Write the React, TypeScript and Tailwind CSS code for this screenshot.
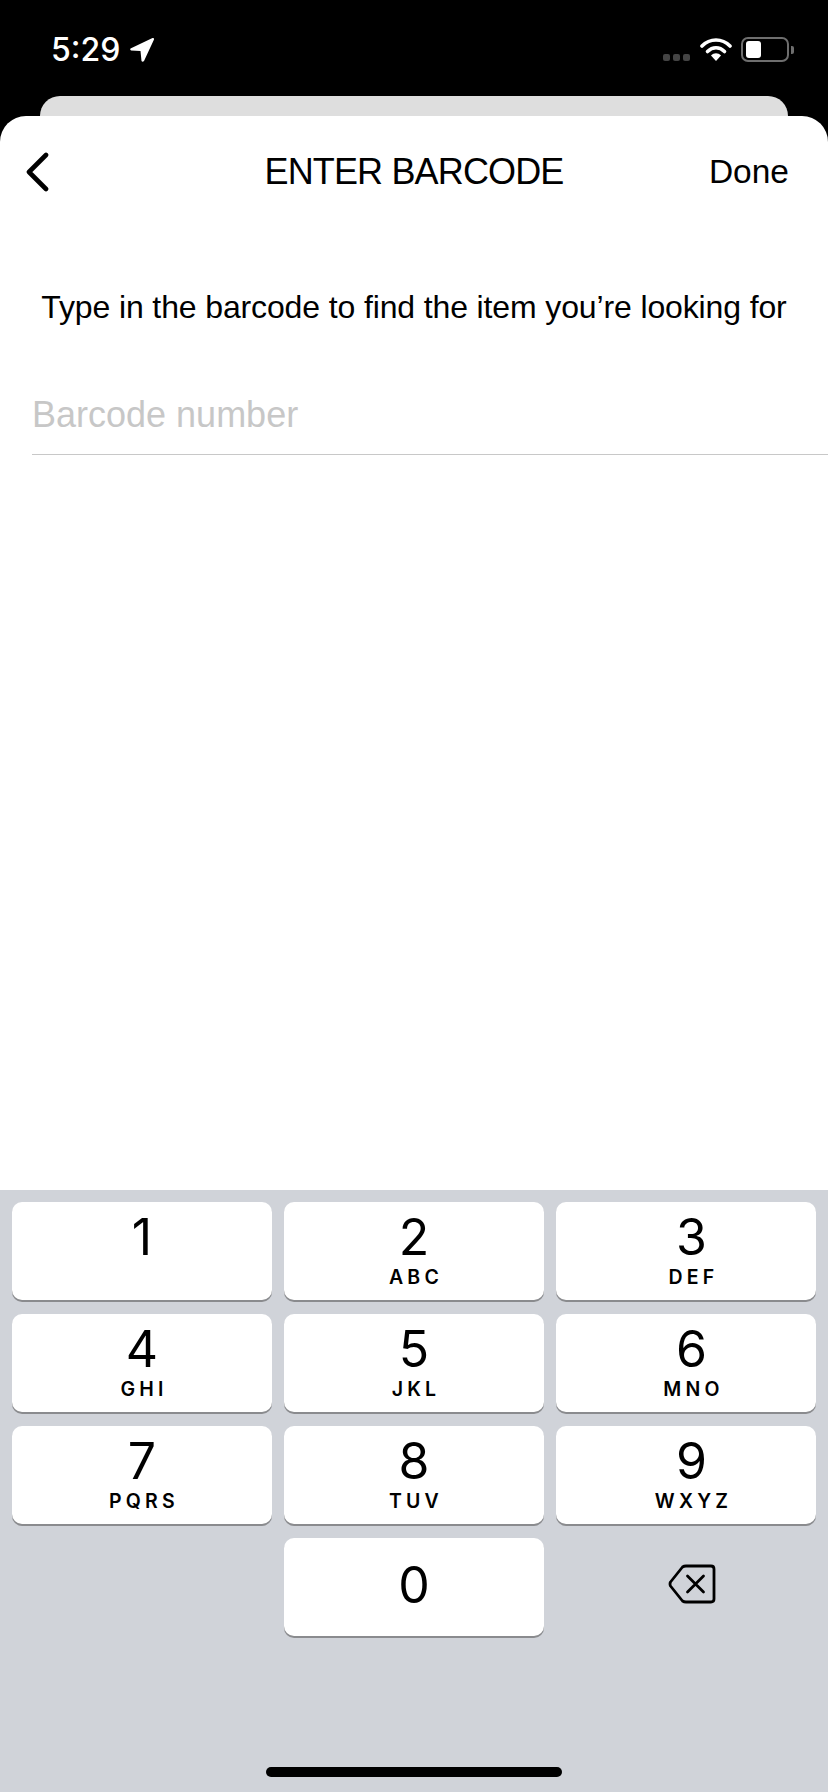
const keys: [string, string][] = [
  ['1', ''], ['2', 'ABC'], ['3', 'DEF'],
  ['4', 'GHI'], ['5', 'JKL'], ['6', 'MNO'],
  ['7', 'PQRS'], ['8', 'TUV'], ['9', 'WXYZ'],
];

function Key({ n, l, last }: { n: string; l: string; last: boolean }) {
  return (
    <div className={`h-[98px] rounded-[10px] bg-white shadow-[0_2px_0_#8a8b8e] flex flex-col items-center ${last ? 'pl-[11px]' : ''}`}>
      <div className="font-['Inter',sans-serif] text-[50px] leading-[50px] mt-[10px] text-black">{n}</div>
      {l && <div className="font-['Inter',sans-serif] font-semibold text-[19.5px] leading-[20px] tracking-[4.2px] mt-[5px] pl-[4px] text-black">{l}</div>}
    </div>
  );
}

export default function App() {
  return (
    <div className="w-[828px] h-[1792px] bg-black flex flex-col overflow-hidden">
      <div className="h-[96px] flex justify-between shrink-0">
        <div className="flex items-start pl-[51px] pt-[28px] gap-[9px]">
          <span className="font-['Inter',sans-serif] font-medium text-[32px] leading-[44px] text-white">5:29</span>
          <svg width="26" height="26" viewBox="0 0 26 26" className="mt-[9px]">
            <path d="M1.5 11.5 L23.5 1 Q25.5 0.5 25 2.5 L15 24 Q13.5 25.5 12.5 24 L11.5 14 L2 13.6 Q0.5 12.5 1.5 11.5 Z" fill="#fff" />
          </svg>
        </div>
        <div className="flex items-start pr-[34px] pt-[37px]">
          <div className="flex gap-[3px] mt-[17px] mr-[10px]">
            <div className="w-[7px] h-[7px] rounded-[2px] bg-[#444]" />
            <div className="w-[7px] h-[7px] rounded-[2px] bg-[#444]" />
            <div className="w-[7px] h-[7px] rounded-[2px] bg-[#444]" />
          </div>
          <svg width="32" height="25" viewBox="0 0 32 25" className="mr-[9px]">
            <path d="M2 9 C10 1 22 1 30 9" fill="none" stroke="#fff" strokeWidth="3.6" strokeLinecap="round" />
            <path d="M7.5 14.5 C12.5 9.5 19.5 9.5 24.5 14.5" fill="none" stroke="#fff" strokeWidth="3.6" strokeLinecap="round" />
            <path d="M11 18.5 C14 15.5 18 15.5 21 18.5 L16 24 Z" fill="#fff" />
          </svg>
          <div className="w-[48px] h-[25px] rounded-[7px] border-2 border-[#6e6e6e] px-[3px] py-[2px]">
            <div className="w-[15px] h-full rounded-[3px] bg-white" />
          </div>
          <div className="w-[3px] h-[8px] rounded-r-[2px] bg-[#6e6e6e] ml-[2px] mt-[9px]" />
        </div>
      </div>
      <div className="h-[20px] mx-[40px] bg-[#dedede] rounded-t-[20px] shrink-0" />
      <div className="flex-1 bg-white rounded-t-[26px] flex flex-col font-['Liberation_Sans',sans-serif] text-black">
        <div className="h-[112px] pl-[25px] pr-[39px] flex items-center justify-between relative">
          <svg width="24" height="40" viewBox="0 0 24 40">
            <path d="M21 3 L4 20 L21 37" fill="none" stroke="#000" strokeWidth="4.6" strokeLinecap="round" strokeLinejoin="round" />
          </svg>
          <div className="absolute left-0 right-0 text-center text-[36px] leading-[40px] tracking-[-0.85px]">ENTER BARCODE</div>
          <div className="text-[33.5px] leading-[40px]">Done</div>
        </div>
        <div className="text-center text-[32px] leading-[40px] tracking-[-0.13px] mt-[59px]">Type in the barcode to find the item you’re looking for</div>
        <div className="ml-[32px] mt-[54px] h-[74px] border-b border-[#c8c8c8] text-[36px] leading-[40px] pt-[14px] text-[#c7c7c7]">Barcode number</div>
        <div className="flex-1" />
      </div>
      <div className="h-[602px] bg-[#d0d3d9] shrink-0 flex flex-col">
        <div className="grid grid-cols-3 gap-x-[12px] gap-y-[14px] px-[12px] pt-[12px]">
          {keys.map(([n, l], i) => <Key key={n} n={n} l={l} last={i % 3 === 2} />)}
          <div />
          <div className="h-[98px] rounded-[10px] bg-white shadow-[0_2px_0_#8a8b8e] flex items-center justify-center font-['Inter',sans-serif] text-[50px] leading-[50px] pb-[4px] text-black">0</div>
          <div className="flex items-center justify-center pl-[11px] pb-[6px]">
            <svg width="48" height="40" viewBox="0 0 48 40">
              <path d="M18 2 H43 Q46 2 46 5 V35 Q46 38 43 38 H18 Q16 38 14.5 37 L2.5 22 Q1.5 20 2.5 18 L14.5 3 Q16 2 18 2 Z" fill="none" stroke="#000" strokeWidth="2.8" strokeLinejoin="round" />
              <path d="M19.5 12 L35.5 28 M35.5 12 L19.5 28" fill="none" stroke="#000" strokeWidth="2.8" strokeLinecap="round" />
            </svg>
          </div>
        </div>
        <div className="flex-1 flex items-end justify-center pb-[15px]">
          <div className="w-[296px] h-[10px] rounded-full bg-black" />
        </div>
      </div>
    </div>
  );
}
